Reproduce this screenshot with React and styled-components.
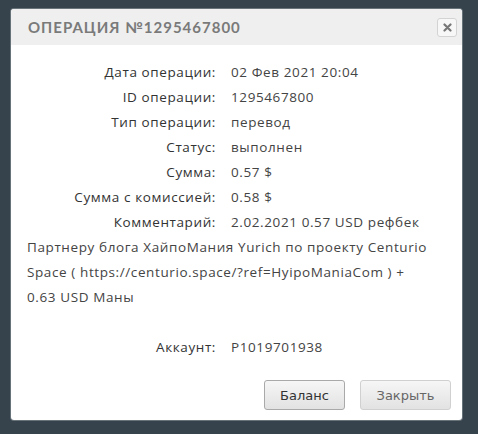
import React from 'react'
import styled, { createGlobalStyle } from 'styled-components'

const Global = createGlobalStyle`
  html, body {
    margin: 0;
    padding: 0;
    background: #36434c;
  }
  body {
    width: 478px;
    height: 434px;
    overflow: hidden;
    font-family: "Open Sans", "Liberation Sans", sans-serif;
  }
`

const Page = styled.div`
  padding: 9px 0 0 11px;
`

const Dialog = styled.div`
  width: 451px;
  height: 411px;
  background: #fff;
  border-radius: 3px;
  box-shadow: 0 0 0 1px rgba(255,255,255,0.25);
  display: flex;
  flex-direction: column;
  overflow: hidden;
`

const Header = styled.div`
  height: 36px;
  background: #efefef;
  display: flex;
  align-items: center;
  justify-content: space-between;
  padding: 0 5px 0 17px;
`

const Title = styled.h2`
  margin: 0;
  font-family: "Lato", sans-serif;
  font-size: 15px;
  font-weight: 700;
  letter-spacing: 1px;
  color: #7a7a7a;
  text-transform: uppercase;
`

const CloseX = styled.button`
  width: 20px;
  height: 19px;
  padding: 0;
  border: 1px solid #d3d3d3;
  border-radius: 3px;
  background: #f7f7f7;
  display: flex;
  align-items: center;
  justify-content: center;
`

const Body = styled.div`
  flex: 1;
  padding: 15px 16px 0 16px;
  font-size: 13.5px;
  letter-spacing: 0.6px;
  line-height: 25px;
  color: #444;
`

const Row = styled.div`
  min-height: ${p => (p.$blank ? '25px' : 'auto')};
`

const Label = styled.span`
  display: inline-block;
  width: 189px;
  margin-right: 15px;
  text-align: right;
  color: #333;
`

const Footer = styled.div`
  display: flex;
  justify-content: flex-end;
  gap: 15px;
  padding: 0 11px 10px 0;
`

const Button = styled.button`
  height: 30px;
  width: ${p => p.$w}px;
  border-radius: 3px;
  border: 1px solid ${p => (p.$primary ? '#a9a9a9' : '#d0d0d0')};
  background: linear-gradient(#f6f6f6, #e2e2e2);
  color: ${p => (p.$primary ? '#333' : '#666')};
  font-family: "DejaVu Sans", "Liberation Sans", sans-serif;
  font-size: 13px;
`

const rows = [
  ['Дата операции:', '02 Фев 2021 20:04'],
  ['ID операции:', '1295467800'],
  ['Тип операции:', 'перевод'],
  ['Статус:', 'выполнен'],
  ['Сумма:', '0.57 $'],
  ['Сумма с комиссией:', '0.58 $'],
  ['Комментарий:', '2.02.2021 0.57 USD рефбек Партнеру блога ХайпоМания Yurich по проекту Centurio Space ( https://centurio.space/?ref=HyipoManiaCom ) + 0.63\u00A0USD Маны'],
]

export default function App() {
  return (
    <Page>
      <Global />
      <Dialog>
        <Header>
          <Title>Операция №1295467800</Title>
          <CloseX>
            <svg width="9" height="9" viewBox="0 0 9 9">
              <path d="M1.5 1.5 L7.5 7.5 M7.5 1.5 L1.5 7.5" stroke="#777" strokeWidth="2.2" strokeLinecap="round" />
            </svg>
          </CloseX>
        </Header>
        <Body>
          {rows.map(([k, v]) => (
            <Row key={k}>
              <Label>{k}</Label>
              {v}
            </Row>
          ))}
          <Row $blank />
          <Row>
            <Label>Аккаунт:</Label>
            P1019701938
          </Row>
        </Body>
        <Footer>
          <Button $primary $w={81}>Баланс</Button>
          <Button $w={91}>Закрыть</Button>
        </Footer>
      </Dialog>
    </Page>
  )
}
